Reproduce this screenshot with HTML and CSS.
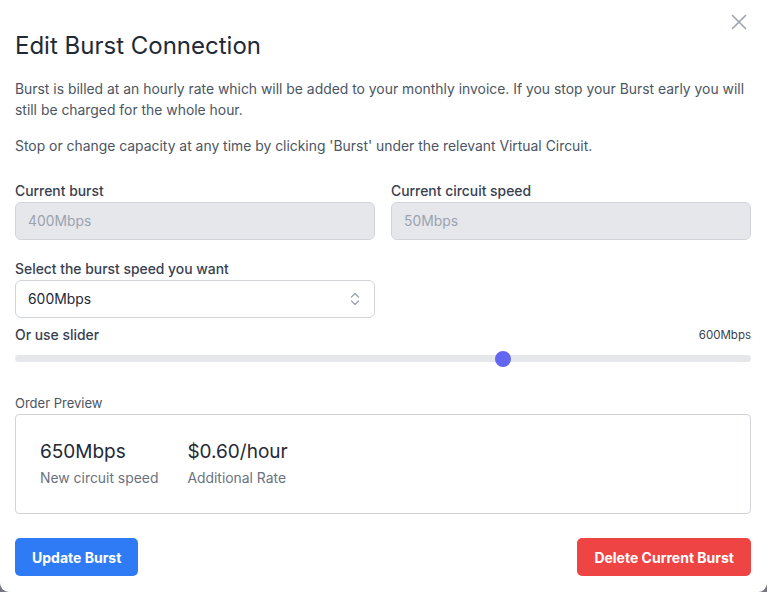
FILE: index.html
```html
<!DOCTYPE html>
<html>
<head>
<meta charset="utf-8">
<link rel="stylesheet" href="styles.css">
</head>
<body>
<div class="modal">
  <div class="header">
    <h1 class="title">Edit Burst Connection</h1>
    <button class="close" aria-label="Close">
      <svg width="16" height="16" viewBox="0 0 16 16"><path d="M1.5 1.5L14.5 14.5M14.5 1.5L1.5 14.5" stroke="#9ca3af" stroke-width="1.6" stroke-linecap="round"/></svg>
    </button>
  </div>
  <p class="text p1">Burst is billed at an hourly rate which will be added to your monthly invoice. If you stop your Burst early you will still be charged for the whole hour.</p>
  <p class="text p2">Stop or change capacity at any time by clicking 'Burst' under the relevant Virtual Circuit.</p>

  <div class="grid2">
    <div class="field">
      <label class="label">Current burst</label>
      <div class="input disabled">400Mbps</div>
    </div>
    <div class="field">
      <label class="label">Current circuit speed</label>
      <div class="input disabled">50Mbps</div>
    </div>
    <div class="field">
      <label class="label sel-label">Select the burst speed you want</label>
      <div class="input select">
        <span>600Mbps</span>
        <svg class="chev" width="10" height="14" viewBox="0 0 10 14"><path d="M1.5 5L5 1.5L8.5 5M1.5 9L5 12.5L8.5 9" fill="none" stroke="#9ca3af" stroke-width="1.3" stroke-linecap="round" stroke-linejoin="round"/></svg>
      </div>
    </div>
  </div>

  <div class="slider-head">
    <span class="label">Or use slider</span>
    <span class="slider-val">600Mbps</span>
  </div>
  <div class="track"><div class="fill" style="width:66.3%"><span class="thumb"></span></div></div>

  <div class="preview-label">Order Preview</div>
  <div class="preview">
    <div class="stat">
      <div class="stat-val">650Mbps</div>
      <div class="stat-lab">New circuit speed</div>
    </div>
    <div class="stat">
      <div class="stat-val">$0.60/hour</div>
      <div class="stat-lab">Additional Rate</div>
    </div>
  </div>

  <div class="actions">
    <button class="btn blue">Update Burst</button>
    <button class="btn red">Delete Current Burst</button>
  </div>
</div>
</body>
</html>
```

FILE: styles.css
```css
* { box-sizing: border-box; }
html, body { margin: 0; padding: 0; }
body {
  background: #747780;
  font-family: "Inter", "Noto Sans", sans-serif;
  width: 767px;
  height: 592px;
  overflow: hidden;
}
.modal {
  background: #fff;
  height: 592px;
  border-radius: 0 0 9px 9px;
  padding: 0 16px 0 15px;
}
.header {
  display: flex;
  justify-content: space-between;
  align-items: flex-start;
}
.title {
  margin: 30px 0 0 0;
  font-size: 24px;
  line-height: 32px;
  font-weight: 400;
  color: #1f2937;
  letter-spacing: 0;
}
.close {
  margin-top: 14px;
  margin-right: 4px;
  border: 0;
  background: none;
  padding: 0;
  width: 16px;
  height: 16px;
  display: flex;
}
.text {
  margin: 0;
  font-size: 13.9px;
  line-height: 21px;
  color: #4b5563;
}
.p1 { margin-top: 17px; }
.p2 { margin-top: 15px; }
.grid2 {
  display: grid;
  grid-template-columns: 1fr 1fr;
  column-gap: 16px;
  margin-top: 24px;
}
.field { display: flex; flex-direction: column; }
.label {
  font-size: 13.9px;
  line-height: 20px;
  font-weight: 500;
  color: #374151;
  margin-bottom: 1px;
}
.sel-label { margin-top: 19px; }
.input {
  height: 38px;
  border: 1px solid #d1d5db;
  border-radius: 6px;
  padding: 0 12px;
  display: flex;
  align-items: center;
  font-size: 13.9px;
  color: #111827;
}
.disabled {
  background: #e5e7eb;
  color: #9ca3af;
}
.select {
  justify-content: space-between;
  background: #fff;
  color: #1f2937;
}
.chev { margin-right: 2px; }
.slider-head {
  display: flex;
  justify-content: space-between;
  align-items: center;
  margin-top: 7px;
}
.slider-head .label { margin-bottom: 0; }
.slider-val {
  font-size: 11.5px;
  color: #374151;
}
.track {
  margin-top: 10px;
  height: 7px;
  border-radius: 4px;
  background: #e5e7eb;
}
.fill {
  height: 7px;
  display: flex;
  justify-content: flex-end;
  align-items: center;
}
.thumb {
  width: 16px;
  height: 16px;
  border-radius: 50%;
  background: #6366f1;
  margin-right: -8px;
  flex: none;
}
.preview-label {
  margin-top: 31px;
  font-size: 13px;
  line-height: 20px;
  color: #4b5563;
}
.preview {
  margin-top: 1px;
  border: 1px solid #d1d5db;
  border-radius: 4px;
  height: 100px;
  padding: 25px 24px;
  display: flex;
  gap: 29px;
}
.stat-val {
  font-size: 19px;
  line-height: 24px;
  color: #1f2937;
}
.stat-lab {
  margin-top: 4px;
  font-size: 13.9px;
  line-height: 20px;
  color: #6b7280;
}
.actions {
  display: flex;
  justify-content: space-between;
  margin-top: 24px;
}
.btn {
  height: 38px;
  border: 0;
  border-radius: 5px;
  padding: 0 17px;
  font-family: inherit;
  font-size: 14px;
  font-weight: 700;
  color: #fff;
}
.blue { background: #2f7bf5; }
.red { background: #ef4444; }
```
